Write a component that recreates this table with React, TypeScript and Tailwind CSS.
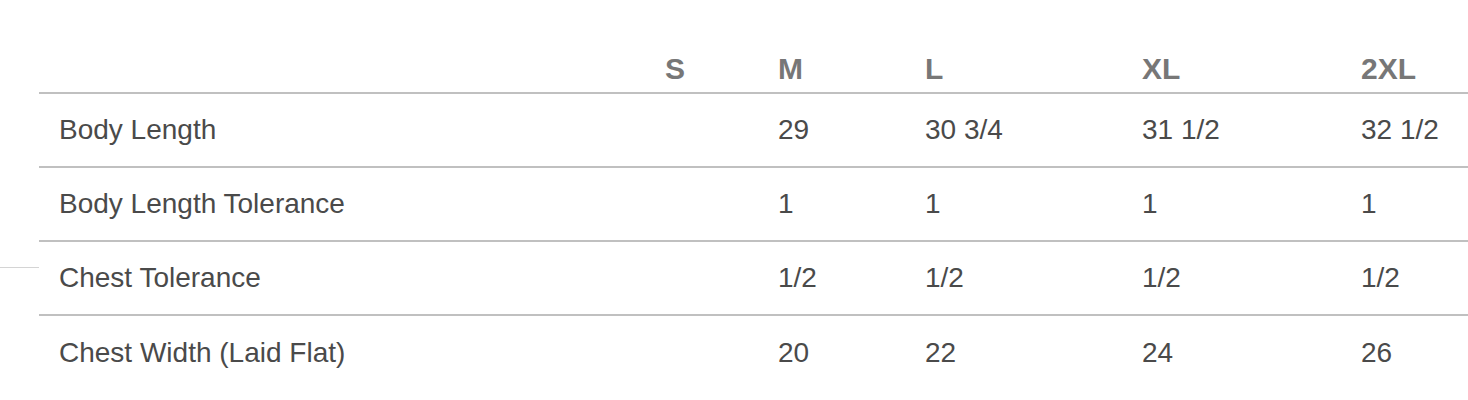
const sizes = ["S", "M", "L", "XL", "2XL"];

const rows = [
  { label: "Body Length", values: ["", "29", "30 3/4", "31 1/2", "32 1/2"] },
  { label: "Body Length Tolerance", values: ["", "1", "1", "1", "1"] },
  { label: "Chest Tolerance", values: ["", "1/2", "1/2", "1/2", "1/2"] },
  { label: "Chest Width (Laid Flat)", values: ["", "20", "22", "24", "26"] },
];

const cols = "grid grid-cols-[605px_113px_147px_217px_219px_1fr]";

export default function App() {
  return (
    <div className="relative h-[400px] w-[1468px] overflow-hidden bg-white font-['Liberation_Sans',Arial,sans-serif]">
      {/* stray rule from the neighbouring block */}
      <div className="absolute left-0 top-[267px] h-px w-[39px] bg-[#d4d4d4]" />

      <div className="ml-[39px] pt-[41px]">
        {/* Header */}
        <div className={`${cols} h-[53px] items-center border-b-2 border-[#c0c0c0] pt-[4px] text-[30px] font-bold leading-none text-[#777777]`}>
          <div />
          {sizes.map((s) => (
            <div key={s} className="pl-[21px]">
              {s}
            </div>
          ))}
        </div>

        {/* Rows */}
        {rows.map((row) => (
          <div
            key={row.label}
            className={`${cols} h-[74px] items-center border-b-2 border-[#c0c0c0] text-[28px] leading-none text-[#4a4a4a] last:border-b-0`}
          >
            <div className="pl-[20px]">{row.label}</div>
            {row.values.map((v, i) => (
              <div key={i} className="pl-[21px]">
                {v}
              </div>
            ))}
          </div>
        ))}
      </div>
    </div>
  );
}
